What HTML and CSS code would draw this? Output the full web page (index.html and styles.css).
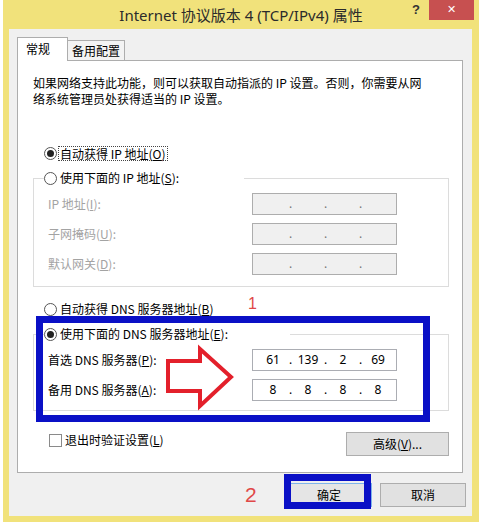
FILE: index.html
```html
<!DOCTYPE html>
<html lang="zh-CN">
<head>
<meta charset="utf-8">
<title>Internet 协议版本 4 (TCP/IPv4) 属性</title>
<link rel="stylesheet" href="styles.css">
</head>
<body>
<div class="window">
  <div class="titlebar">
    <span class="title">Internet 协议版本 4 (TCP/IPv4) 属性</span>
    <span class="help">?</span>
    <span class="close">&#x2715;</span>
  </div>
  <div class="client">
    <div class="tabs">
      <div class="tab active">常规</div>
      <div class="tab">备用配置</div>
    </div>
    <div class="panel">
      <p class="intro">如果网络支持此功能，则可以获取自动指派的 IP 设置。否则，你需要从网<br>络系统管理员处获得适当的 IP 设置。</p>

      <div class="radio first">
        <span class="dot on"></span><span class="focus">自动获得 IP 地址(<u>O</u>)</span>
      </div>

      <fieldset class="group">
        <legend class="radio ip-legend"><span class="dot"></span><span class="txt">使用下面的 IP 地址(<u>S</u>):</span></legend>
        <div class="fields">
          <span class="lbl off">IP 地址(<u>I</u>):</span>
          <div class="ip off"><span></span><i>.</i><span></span><i>.</i><span></span><i>.</i><span></span></div>
          <span class="lbl off">子网掩码(<u>U</u>):</span>
          <div class="ip off"><span></span><i>.</i><span></span><i>.</i><span></span><i>.</i><span></span></div>
          <span class="lbl off">默认网关(<u>D</u>):</span>
          <div class="ip off"><span></span><i>.</i><span></span><i>.</i><span></span><i>.</i><span></span></div>
        </div>
      </fieldset>

      <div class="radio second">
        <span class="dot"></span><span class="txt">自动获得 DNS 服务器地址(<u>B</u>)</span>
      </div>

      <fieldset class="group dns">
        <legend class="radio dns-legend"><span class="dot on"></span><span class="txt">使用下面的 DNS 服务器地址(<u>E</u>):</span></legend>
        <div class="fields">
          <span class="lbl">首选 DNS 服务器(<u>P</u>):</span>
          <div class="ip"><span>61</span><i>.</i><span>139</span><i>.</i><span>2</span><i>.</i><span>69</span></div>
          <span class="lbl">备用 DNS 服务器(<u>A</u>):</span>
          <div class="ip"><span>8</span><i>.</i><span>8</span><i>.</i><span>8</span><i>.</i><span>8</span></div>
        </div>
      </fieldset>

      <div class="panel-foot">
        <label class="check"><span class="box"></span><span>退出时验证设置(<u>L</u>)</span></label>
        <button class="btn advanced">高级(<u>V</u>)...</button>
      </div>
    </div>
    <div class="buttons">
      <button class="btn ok">确定</button>
      <button class="btn">取消</button>
    </div>
  </div>
</div>

<!-- annotations drawn on top of the screenshot -->
<div class="mark box-dns"></div>
<div class="mark box-ok"></div>
<span class="mark num one">1</span>
<span class="mark num two">2</span>
<svg class="mark arrow" width="80" height="70" viewBox="0 0 80 70">
  <polygon points="8,18 40,18 40,6 71,34 40,63 40,48 8,48" fill="#fff" stroke="#e3202b" stroke-width="4" stroke-linejoin="miter"/>
</svg>
</body>
</html>
```

FILE: styles.css
```css
* { box-sizing: border-box; }

body {
  margin: 0;
  width: 483px;
  height: 523px;
  overflow: hidden;
  position: relative;
  background: #fff;
  color: #000;
  font: 12px/16px "Noto Sans CJK SC", "Noto Sans", sans-serif;
}

u { text-decoration: underline; text-underline-offset: 1px; }

/*---------------- window frame ----------------*/

.window {
  margin-left: 3px;
  width: 476px;
  height: 522px;
  background: #f1e27b;
  padding: 0 7px 6px 6px;
  display: flex;
  flex-direction: column;
}

.titlebar {
  height: 29px;
  margin: 0 -7px 0 -6px;
  padding: 0 5px 0 71px;
  display: flex;
  align-items: flex-start;
}
.title {
  flex: 1;
  text-align: center;
  font: 15px/30px "Noto Sans", "Noto Sans CJK SC", sans-serif;
  color: #2b2b2b;
}
.help {
  width: 16px;
  margin-right: 5px;
  text-align: center;
  font: bold 13px/20px "Liberation Sans", sans-serif;
  color: #333;
}
.close {
  width: 45px;
  height: 20px;
  background: #c75050;
  color: #fff;
  text-align: center;
  font: bold 11px/20px "DejaVu Sans", sans-serif;
}

.client {
  flex: 1;
  background: #f0f0f0;
  padding: 8px 6px 9px 8px;
  display: flex;
  flex-direction: column;
}

/*---------------- tabs ----------------*/

.tabs {
  height: 23px;
  display: flex;
  align-items: flex-end;
}
.tab {
  height: 20px;
  padding: 0 4px;
  border: 1px solid #adadad;
  border-bottom: none;
  border-left: none;
  background: #f3f3f3;
  line-height: 19px;
}
.tab.active {
  width: 51px;
  height: 24px;
  margin-bottom: -1px;
  padding: 0 8px;
  border-left: 1px solid #adadad;
  background: #fff;
  position: relative;
  z-index: 1;
  line-height: 22px;
}

.panel {
  height: 413px;
  margin-right: 3px;
  background: #fff;
  border: 1px solid #adadad;
  padding: 0 13px 16px 15px;
  display: flex;
  flex-direction: column;
}

.intro {
  margin: 14px 0 0;
  line-height: 16px;
}

/*---------------- radios and groups ----------------*/

.radio {
  height: 16px;
  display: flex;
  align-items: center;
}
.radio.first { margin: 39px 0 0 11px; }
.radio.second { margin: 14px 0 0 11px; }

.dot {
  width: 13px;
  height: 13px;
  border: 1px solid #555;
  border-radius: 50%;
  background: #fff;
  position: relative;
  flex: none;
}
.dot.on::after {
  content: "";
  position: absolute;
  left: 2px;
  top: 2px;
  width: 7px;
  height: 7px;
  border-radius: 50%;
  background: #222;
}
.radio .txt { margin-left: 3px; }
.focus {
  margin-left: 1px;
  padding: 0 1px;
  border: 1px dotted #444;
  line-height: 13px;
}

.group {
  margin: 9px 0 0;
  padding: 7px 0 11px;
  border: 1px solid #dcdcdc;
  min-width: 0;
}
.group.dns { padding-bottom: 9px; }
.group legend {
  margin-left: 10px;
  padding: 0;
}
.ip-legend { width: 200px; }
.dns-legend { width: 246px; }

.fields {
  margin-left: 14px;
  display: grid;
  grid-template-columns: 204px 145px;
  row-gap: 8px;
  align-items: center;
}
.lbl.off { color: #a3a3a3; }

.ip {
  height: 22px;
  border: 1px solid #abadb3;
  background: #fff;
  padding-left: 4px;
  display: flex;
  align-items: center;
  font: 12px/20px "Noto Sans", sans-serif;
}
.ip span { width: 32px; text-align: center; }
.ip i { width: 3px; font-style: normal; text-align: center; }
.ip.off { background: #f0f0f0; border-color: #adadad; color: #777; }

/*---------------- footer of panel ----------------*/

.panel-foot {
  margin-top: 21px;
  height: 24px;
  display: flex;
  align-items: center;
  justify-content: space-between;
}
.check {
  margin: -8px 0 0 16px;
  display: flex;
  align-items: center;
}
.check .box {
  width: 13px;
  height: 13px;
  border: 1px solid #8a8a8a;
  background: #fff;
  margin-right: 3px;
}

.btn {
  height: 24px;
  border: 1px solid #adadad;
  background: #e1e1e1;
  font: 12px/20px "Noto Sans CJK SC", "Noto Sans", sans-serif;
  color: #000;
  padding: 0;
}
.advanced { width: 103px; }

.buttons {
  margin-top: 10px;
  display: flex;
  justify-content: flex-end;
  gap: 8px;
}
.buttons .btn { width: 86px; }
.btn.ok { background: #e5e5e5; border-color: #7eb4ea; }

/*---------------- annotations ----------------*/

.mark { position: absolute; }
.box-dns {
  left: 36px;
  top: 316px;
  width: 394px;
  height: 106px;
  border: 7px solid #0a10c6;
}
.box-ok {
  left: 284px;
  top: 474px;
  width: 87px;
  height: 35px;
  border: 7px solid #0a10c6;
}
.num {
  font-family: "Liberation Sans", sans-serif;
  color: #e04848;
}
.one { left: 248px; top: 295px; font-size: 16px; line-height: 18px; }
.two { left: 245px; top: 484px; font-size: 21px; line-height: 22px; }
.arrow { left: 160px; top: 343px; }
```
